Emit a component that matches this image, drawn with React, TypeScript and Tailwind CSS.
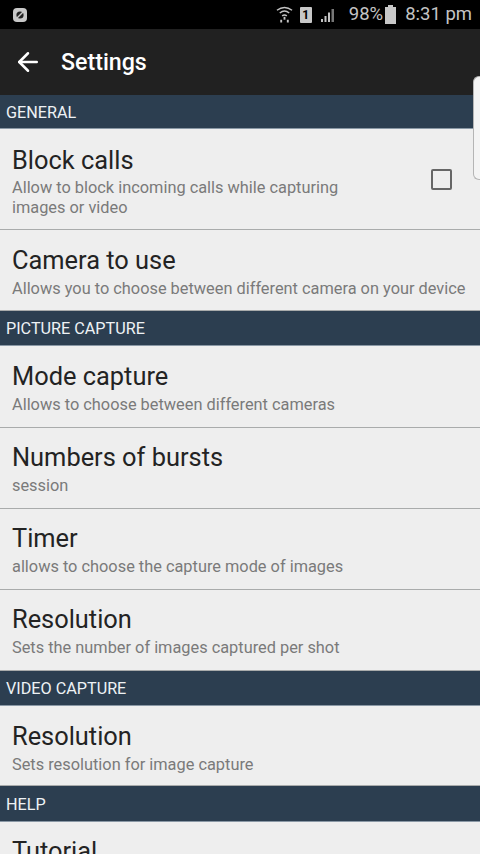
import { ArrowLeft } from "lucide-react";

function SectionHeader({ title, height = "h-[35px]" }: { title: string; height?: string }) {
  return (
    <div className={`${height} shrink-0 bg-[#2c3e50] border-b border-[#8a98a5] flex items-center pl-[6px] pt-[3px] text-[16.2px] leading-none text-[#eef2f5]`}>
      {title}
    </div>
  );
}

function Row({
  title,
  summary,
  height = "h-[81px]",
  pad = "pt-[13px]",
  checkbox,
}: {
  title: string;
  summary: string;
  height?: string;
  pad?: string;
  checkbox?: boolean;
}) {
  return (
    <div className={`${height} ${pad} shrink-0 border-b border-[#a9abab] flex items-start pl-[12px]`}>
      <div className="flex-1 min-w-0">
        <div className="text-[25.4px] leading-[32px] text-[#232323]">{title}</div>
        <div className={`text-[16.35px] leading-[20px] text-[#7a7a7a] whitespace-pre-line ${checkbox ? "mt-[2px]" : "mt-[3px]"}`}>{summary}</div>
      </div>
      {checkbox && (
        <div className="w-[21px] h-[21px] mt-[25px] mr-[28px] border-2 border-[#666666] rounded-[2px]" />
      )}
    </div>
  );
}

export default function App() {
  return (
    <div
      className="relative w-[480px] h-[854px] overflow-hidden bg-[#eeeeee] flex flex-col"
      style={{ fontFamily: "Roboto, sans-serif" }}
    >
      {/* status bar */}
      <div className="h-[29px] shrink-0 bg-black flex items-center pl-[12px] pr-[8px] text-[#c4c4c4]">
        <svg width="16" height="16" viewBox="0 0 16 16">
          <rect x="1" y="1" width="14" height="14" rx="4" fill="#c8c8c8" />
          <circle cx="8" cy="8" r="3.6" fill="#222" />
          <path d="M5 11 L11 5" stroke="#c8c8c8" strokeWidth="1.4" />
        </svg>
        <div className="flex-1" />
        <svg width="17" height="19" viewBox="0 0 18 19" fill="none" stroke="#c4c4c4" strokeWidth="1.5" className="mr-[7px]">
          <path d="M1 5 Q9 -1 17 5" />
          <path d="M4 8 Q9 3.5 14 8" />
          <path d="M6.5 11 Q9 9 11.5 11" />
          <path d="M9 12 V15" strokeWidth="2" />
          <path d="M5.5 15 v3 M12.5 15 v3" strokeWidth="2" />
        </svg>
        <div className="w-[12px] h-[16px] bg-[#c8c8c8] rounded-[1px] mr-[8px] flex items-center justify-center text-[12px] leading-none font-bold text-black">
          1
        </div>
        <svg width="16" height="16" viewBox="0 0 16 16" className="mr-[13px]" fill="#c4c4c4">
          <rect x="1" y="12" width="2" height="3" />
          <rect x="4.5" y="9" width="2" height="6" />
          <rect x="8" y="5.5" width="2" height="9.5" />
          <rect x="11.5" y="2" width="2.5" height="13" fill="#777" />
        </svg>
        <span className="text-[18.5px] leading-none mr-[1px]">98%</span>
        <svg width="13" height="19" viewBox="0 0 13 19" fill="#c8c8c8" className="mr-[8px]">
          <path d="M4 0 H9 V2 H12 V19 H1 V2 H4 Z" />
        </svg>
        <span className="text-[18.5px] leading-none">8:31 pm</span>
      </div>

      {/* toolbar */}
      <div className="h-[66px] shrink-0 bg-[#212121] flex items-center pl-[13px] text-white">
        <ArrowLeft size={30} strokeWidth={2} />
        <span className="ml-[18px] pt-[2px] text-[23.2px] font-medium leading-none">Settings</span>
      </div>

      <SectionHeader title="GENERAL" height="h-[34px]" />
      <Row
        title="Block calls"
        summary={"Allow to block incoming calls while capturing\nimages or video"}
        height="h-[101px]"
        pad="pt-[15px]"
        checkbox
      />
      <Row title="Camera to use" summary="Allows you to choose between different camera on your device" pad="pt-[14px]" />
      <SectionHeader title="PICTURE CAPTURE" />
      <Row title="Mode capture" summary="Allows to choose between different cameras" height="h-[82px]" pad="pt-[14px]" />
      <Row title="Numbers of bursts" summary="session" />
      <Row title="Timer" summary="allows to choose the capture mode of images" />
      <Row title="Resolution" summary="Sets the number of images captured per shot" />
      <SectionHeader title="VIDEO CAPTURE" />
      <Row title="Resolution" summary="Sets resolution for image capture" height="h-[80px]" pad="pt-[14px]" />
      <SectionHeader title="HELP" height="h-[36px]" />
      <Row title="Tutorial" summary="" />

      {/* edge panel handle */}
      <div className="absolute right-0 top-[76px] w-[7px] h-[104px] bg-[#f4f4f4] border border-r-0 border-[#b5b5b5] rounded-l-[6px]" />
    </div>
  );
}
